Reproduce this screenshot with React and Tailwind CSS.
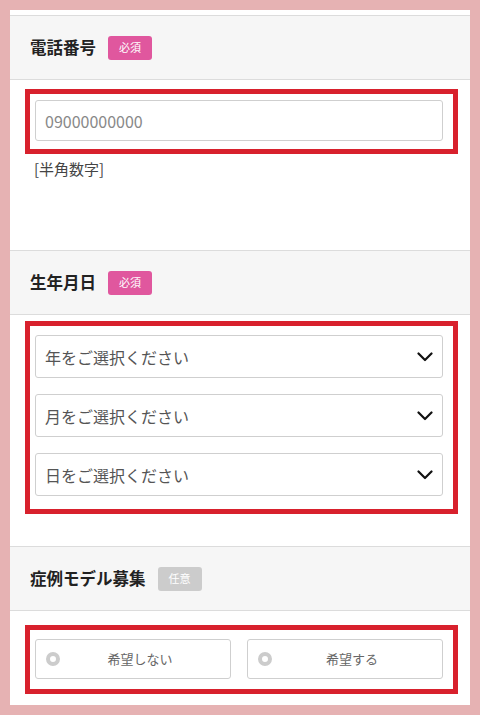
import React from "react";

const font = { fontFamily: '"Noto Sans CJK JP", "Noto Sans", sans-serif' };

function Header({ title, badge, optional }) {
  return (
    <div className="flex h-[65px] items-center border-y border-[#dcdcdc] bg-[#f6f6f6] pl-[20px]">
      <span className="text-[16.5px] font-bold leading-none text-[#222]">{title}</span>
      <span
        className={`ml-[12px] flex h-[24px] w-[44px] items-center justify-center rounded-[3px] text-[11px] leading-none text-white ${
          optional ? "bg-[#cccccc]" : "bg-[#e0579e]"
        }`}
      >
        {badge}
      </span>
    </div>
  );
}

function Chevron() {
  return (
    <svg width="16" height="10" viewBox="0 0 16 10" className="shrink-0">
      <path d="M1.5 1.5 L8 8 L14.5 1.5" fill="none" stroke="#111" strokeWidth="2.2" strokeLinecap="round" strokeLinejoin="round" />
    </svg>
  );
}

function Select({ label }) {
  return (
    <div className="flex h-[43px] items-center justify-between rounded-[3px] border border-[#cfcfcf] bg-white pl-[9px] pr-[9px]">
      <span className="text-[16px] text-[#555]">{label}</span>
      <Chevron />
    </div>
  );
}

function Radio({ label }) {
  return (
    <div className="relative flex h-[40px] flex-1 items-center justify-center rounded-[3px] border border-[#cfcfcf] bg-white pl-[14px]">
      <span className="absolute left-[10px] top-1/2 h-[14px] w-[14px] -translate-y-1/2 rounded-full border-[4px] border-[#cccccc] bg-white" />
      <span className="text-[13px] text-[#666]">{label}</span>
    </div>
  );
}

export default function App() {
  return (
    <div className="h-[715px] w-[480px] bg-[#e6b2b3] p-[10px]" style={font}>
      <div className="flex h-full flex-col bg-white pt-[5px]">
        {/* Section 1 */}
        <Header title="電話番号" badge="必須" />
        <div className="h-[170px]">
          <div className="ml-[15px] mr-[12px] mt-[9px] border-[5px] border-[#d8212d] pb-[8px] pl-[5px] pr-[10px] pt-[6px]">
            <div className="flex h-[41px] items-center rounded-[3px] border border-[#cfcfcf] bg-white pl-[9px]">
              <span className="text-[16px] text-[#888]">09000000000</span>
            </div>
          </div>
          <div className="ml-[24px] mt-[4px] text-[15px] text-[#444]">[半角数字]</div>
        </div>

        {/* Section 2 */}
        <Header title="生年月日" badge="必須" />
        <div className="h-[231px]">
          <div className="ml-[15px] mr-[12px] mt-[6px] flex flex-col gap-[16px] border-[5px] border-[#d8212d] pb-[13px] pl-[5px] pr-[10px] pt-[9px]">
            <Select label="年をご選択ください" />
            <Select label="月をご選択ください" />
            <Select label="日をご選択ください" />
          </div>
        </div>

        {/* Section 3 */}
        <Header title="症例モデル募集" badge="任意" optional />
        <div className="flex-1">
          <div className="ml-[15px] mr-[12px] mt-[14px] flex gap-[16px] border-[5px] border-[#d8212d] pb-[10px] pl-[5px] pr-[10px] pt-[9px]">
            <Radio label="希望しない" />
            <Radio label="希望する" />
          </div>
        </div>
      </div>
    </div>
  );
}
